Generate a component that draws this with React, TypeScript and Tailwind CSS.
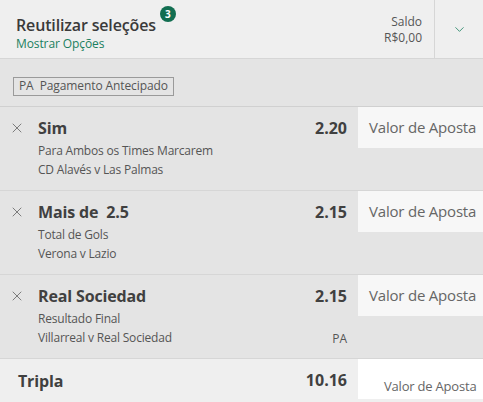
import { X, ChevronDown } from 'lucide-react';

interface Selection {
  id: string;
  name: string;
  market: string;
  event: string;
  odds: string;
  pa?: boolean;
}

const selections: Selection[] = [
  { id: '1', name: 'Sim', market: 'Para Ambos os Times Marcarem', event: 'CD Alavés v Las Palmas', odds: '2.20' },
  { id: '2', name: 'Mais de\u00a0 2.5', market: 'Total de Gols', event: 'Verona v Lazio', odds: '2.15' },
  { id: '3', name: 'Real Sociedad', market: 'Resultado Final', event: 'Villarreal v Real Sociedad', odds: '2.15', pa: true },
];

const App = () => {
  return (
    <div className="w-[483px] h-[402px] overflow-hidden bg-[#e4e4e4] text-[#404040] font-['Open_Sans',sans-serif]">
      {/* Header */}
      <div className="flex h-[59px] bg-[#efefef] border-b border-[#d6d6d6]">
        <div className="flex-1 pl-4 pt-[14px]">
          <div className="flex items-start">
            <span className="text-[16px] leading-[22px] font-semibold text-[#3a3a3a] tracking-[-0.15px]">Reutilizar seleções</span>
            <span className="ml-[4px] -mt-[8px] flex h-[16px] w-[16px] items-center justify-center rounded-full bg-[#126e51] text-[10px] font-bold text-white">3</span>
          </div>
          <div className="text-[12px] leading-[16px] text-[#1b8060] tracking-[-0.1px]">Mostrar Opções</div>
        </div>
        <div className="flex flex-col items-end justify-center pr-3 pt-[2px] text-[12px] leading-[16px] text-[#555]">
          <span>Saldo</span>
          <span>R$0,00</span>
        </div>
        <div className="flex w-[49px] items-center justify-center border-l border-[#d6d6d6]">
          <ChevronDown className="h-[15px] w-[15px] text-[#1b8060]" strokeWidth={1.3} />
        </div>
      </div>

      {/* PA bar */}
      <div className="h-[48px] pl-[13px] pt-[13px] border-b border-[#d0d0d0]">
        <span className="inline-flex h-[19px] items-center border border-[#9a9a9a] px-[5px] text-[12px] text-[#555] tracking-[-0.1px]">
          PA&nbsp; Pagamento Antecipado
        </span>
      </div>

      {/* Selections */}
      {selections.map((s) => (
        <div key={s.id} className="flex h-[84px] border-b border-[#d6d6d6]">
          <div className="w-[38px] pt-[13px] pl-[9px]">
            <X className="h-[16px] w-[16px] text-[#555]" strokeWidth={1.1} />
          </div>
          <div className="flex-1 pt-[10px]">
            <div className="text-[16px] leading-[22px] font-bold text-[#404040] tracking-[-0.15px]">{s.name}</div>
            <div className="mt-[2px] text-[12px] leading-[19px] text-[#555] tracking-[-0.2px]">{s.market}</div>
            <div className="text-[12px] leading-[19px] text-[#555] tracking-[-0.2px]">{s.event}</div>
          </div>
          <div className="flex w-[80px] flex-col items-end pr-[11px] pt-[10px]">
            <span className="text-[16px] leading-[22px] font-bold text-[#404040]">{s.odds}</span>
            <span className="mt-[24px] h-[16px] text-[12px] leading-[16px] text-[#555]">{s.pa ? 'PA' : ''}</span>
          </div>
          <div className="h-[41px] w-[125px] bg-[#f7f7f7] pl-[11px] pt-[10px] text-[15px] leading-[20px] text-[#666] tracking-[-0.2px]">
            Valor de Aposta
          </div>
        </div>
      ))}

      {/* Total */}
      <div className="flex h-[45px] bg-[#efefef]">
        <div className="flex-1 pl-[18px] pt-[11px] text-[16px] leading-[22px] font-bold text-[#404040] tracking-[-0.15px]">Tripla</div>
        <div className="pr-[11px] pt-[10px] text-[16px] leading-[22px] font-bold text-[#404040]">10.16</div>
        <div className="h-[40px] w-[125px] bg-white pl-[26px] pt-[18px] text-[13px] leading-[18px] text-[#666] tracking-[-0.2px]">
          Valor de Aposta
        </div>
      </div>
    </div>
  );
};

export default App;
